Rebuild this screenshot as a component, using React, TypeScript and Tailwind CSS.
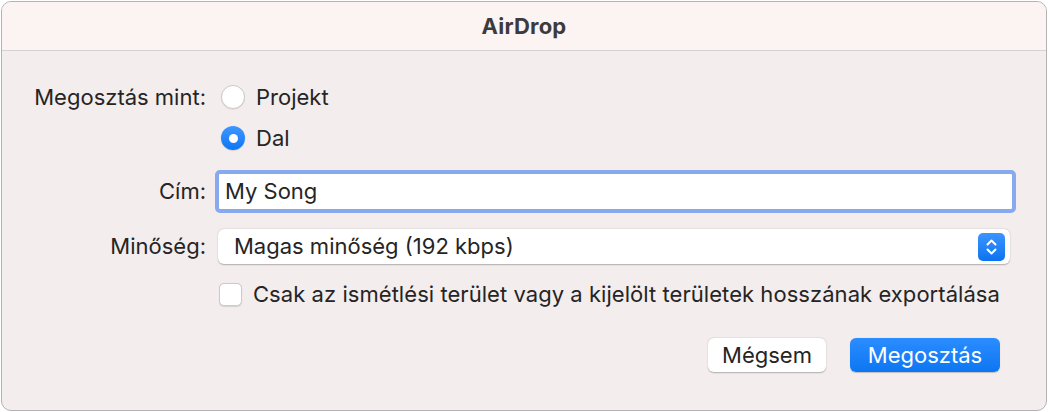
import { useState } from "react";

function Radio({ checked }: { checked: boolean }) {
  if (checked) {
    return (
      <span className="flex h-[24px] w-[24px] items-center justify-center rounded-full bg-gradient-to-b from-[#3c97ff] to-[#0a76f5] shadow-[0_0.5px_1px_rgba(0,0,0,0.25)]">
        <span className="h-[9px] w-[9px] rounded-full bg-white" />
      </span>
    );
  }
  return (
    <span className="h-[24px] w-[24px] rounded-full border border-[#cfcaca] bg-white shadow-[0_0.5px_1px_rgba(0,0,0,0.12)]" />
  );
}

function Stepper() {
  return (
    <span className="flex h-[28px] w-[27px] items-center justify-center rounded-[5px] bg-gradient-to-b from-[#3a95ff] to-[#0a72f0]">
      <svg width="13" height="18" viewBox="0 0 13 18" fill="none">
        <path d="M2.5 6.5 L6.5 2.5 L10.5 6.5" stroke="white" strokeWidth="2" strokeLinecap="round" strokeLinejoin="round" />
        <path d="M2.5 11.5 L6.5 15.5 L10.5 11.5" stroke="white" strokeWidth="2" strokeLinecap="round" strokeLinejoin="round" />
      </svg>
    </span>
  );
}

export default function App() {
  const [mode] = useState<"projekt" | "dal">("dal");
  const [title, setTitle] = useState("My Song");

  return (
    <div className="p-px font-['Inter',sans-serif] text-[22px] text-[#262424]">
      <div className="flex h-[410px] w-[1046px] flex-col overflow-hidden rounded-[10px] border border-[#b7b2b2] bg-[#f3eded]">
        {/* Title bar */}
        <div className="flex h-[49px] items-center justify-center border-b border-[#d6d1d1] bg-[#fcf3f3]">
          <span className="text-[22px] font-bold tracking-[0.2px] text-[#3c3a3a]">AirDrop</span>
        </div>

        {/* Share as */}
        <div className="mt-[34px] flex h-[24px] items-center">
          <div className="w-[204px] text-right">Megosztás mint:</div>
          <div className="ml-[15px] flex items-center gap-[11px]">
            <Radio checked={mode === "projekt"} />
            <span>Projekt</span>
          </div>
        </div>
        <div className="mt-[17px] flex h-[24px] items-center">
          <div className="w-[204px]" />
          <div className="ml-[15px] flex items-center gap-[11px]">
            <Radio checked={mode === "dal"} />
            <span>Dal</span>
          </div>
        </div>

        {/* Title field */}
        <div className="mt-[20px] flex h-[43px] items-center">
          <div className="w-[204px] text-right">Cím:</div>
          <div className="ml-[9px] flex h-[43px] w-[801px] items-center rounded-[5px] border-[4px] border-[#88a9ee] bg-white pl-[6px]">
            <input
              className="w-full bg-transparent outline-none"
              value={title}
              onChange={(e) => setTitle(e.target.value)}
            />
          </div>
        </div>

        {/* Quality */}
        <div className="mt-[16px] flex h-[35px] items-center">
          <div className="w-[204px] text-right">Minőség:</div>
          <div className="ml-[12px] flex h-[35px] w-[792px] items-center justify-between rounded-[6px] bg-white pl-[16px] pr-[5px] shadow-[0_0.5px_1.5px_rgba(0,0,0,0.28)]">
            <span>Magas minőség (192 kbps)</span>
            <Stepper />
          </div>
        </div>

        {/* Checkbox */}
        <div className="mt-[18px] flex h-[24px] items-center">
          <div className="w-[204px]" />
          <div className="ml-[13px] flex items-center gap-[11px]">
            <span className="h-[23px] w-[23px] rounded-[5px] border border-[#cfcaca] bg-white shadow-[0_0.5px_1px_rgba(0,0,0,0.12)]" />
            <span className="tracking-[0.05px]">Csak az ismétlési terület vagy a kijelölt területek hosszának exportálása</span>
          </div>
        </div>

        {/* Buttons */}
        <div className="mt-[32px] flex justify-end gap-[24px] pr-[46px]">
          <button className="h-[34px] w-[118px] rounded-[6px] bg-white shadow-[0_0.5px_1.5px_rgba(0,0,0,0.28)]">
            Mégsem
          </button>
          <button className="h-[34px] w-[150px] rounded-[6px] bg-gradient-to-b from-[#2a8dff] to-[#0a76f2] text-white shadow-[0_0.5px_1px_rgba(0,0,0,0.2)]">
            Megosztás
          </button>
        </div>
      </div>
    </div>
  );
}
